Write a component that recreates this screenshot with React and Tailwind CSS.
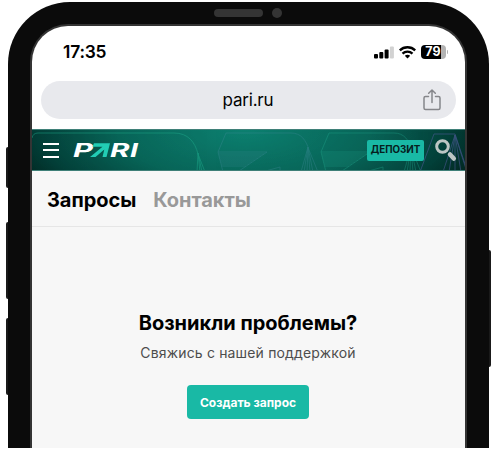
const tabs = [
  { id: "requests", label: "Запросы", className: "text-black" },
  { id: "contacts", label: "Контакты", className: "text-[#999999]" },
];

const hatch = [0, 2, 4, 6, 8, 10, 12, 14];
const fan = [0, 3, 6, 9, 12];

function StatusBar() {
  return (
    <div className="flex h-[52px] shrink-0 items-center justify-between pl-[31px] pr-[17px]">
      <span className="text-[17.4px] font-semibold leading-none tracking-[-0.2px]">17:35</span>
      <div className="flex items-center gap-[5px]">
        <svg width="20" height="13" viewBox="0 0 20 13">
          <rect x="0" y="8" width="4" height="4.5" rx="1" />
          <rect x="5.3" y="6" width="4" height="6.5" rx="1" />
          <rect x="10.6" y="3.4" width="4" height="9.1" rx="1" />
          <rect x="15.9" y="0.5" width="4" height="12" rx="1" fill="#d2d2d2" />
        </svg>
        <svg width="17" height="13" viewBox="0 0 17 13" fill="none" stroke="#000" strokeWidth="2.3">
          <path d="M.8 4.4C5 .2 12 .2 16.2 4.4" />
          <path d="M3.5 7.600C6.3 4.900 10.700 4.900 13.500 7.600" />
          <path d="M5.800 9.800Q8.500 7.700 11.200 9.800L8.500 12.600Z" fill="#000" stroke="none" />
        </svg>
        <div className="flex items-center gap-px">
          <div className="flex h-[14px] w-[25px] items-center justify-center rounded-[4px] bg-[linear-gradient(to_right,#000_80%,#b3b3b3_80%)] pr-px text-[12.5px] font-bold leading-none text-white">
            79
          </div>
          <span className="h-1 w-px rounded-r bg-[#b3b3b3]" />
        </div>
      </div>
    </div>
  );
}

function AddressBar() {
  return (
    <div className="ml-[8.5px] mr-[9.5px] mt-[3px] flex h-[38px] shrink-0 items-center rounded-full bg-[#e8e9ed] pl-[33px] pr-[15px]">
      <span className="flex-1 text-center text-[17px] leading-none tracking-[-0.2px]">pari.ru</span>
      <svg
        width="18"
        height="22"
        viewBox="0 0 18 22"
        fill="none"
        stroke="#85868a"
        strokeWidth="1.5"
        strokeLinecap="round"
        strokeLinejoin="round"
      >
        <path d="M5.5 7.5H2.5Q1 7.5 1 9V19Q1 20.5 2.5 20.5H15.5Q17 20.5 17 19V9Q17 7.5 15.5 7.5H12.5" />
        <path d="M9 13.5V1M5.7 4.2 9 1 12.3 4.2" />
      </svg>
    </div>
  );
}

function PatternShape({ x, color }) {
  return (
    <g transform={`translate(${x} 0)`} stroke={color} fill="none" strokeWidth="0.7">
      <path d="M0 22 8 3H73C83 3 88 10 91 20L100 42" />
      {hatch.map((y) => (
        <path key={y} d={`M${y / 4} ${22 + y}H${49 - y * 1.5}`} />
      ))}
      <path d="M49 22 21 41M0 22 5 42M44 42 62 37V42" />
      {fan.map((dx) => (
        <path key={dx} d={`M90 17 ${83 + dx} 42`} />
      ))}
    </g>
  );
}

function HeaderPattern() {
  return (
    <svg className="absolute inset-0" width="433" height="40" viewBox="0 0 433 40">
      <g fill="none" stroke="#1fa98c" strokeWidth="0.8" opacity="0.6">
        <path d="M0 8Q1 3 6 3H142C156 3 163 12 166 24L173 42" />
        <path d="M166 23 165 42M166 23 168 42M166 23 170 42" />
      </g>
      <g opacity="0.5">
        <PatternShape x={186} color="#3f8a98" />
        <PatternShape x={289} color="#23ab91" />
      </g>
      <g fill="none" stroke="#505b9b" strokeWidth="0.8" opacity="0.7">
        <path d="M388 42 402 4H423L433 34" />
        {fan.map((dx) => (
          <path key={dx} d={`M423 5 ${411 + dx * 2} 42`} />
        ))}
      </g>
    </svg>
  );
}

function Logo() {
  return (
    <svg width="76" height="30" viewBox="-4 -7 76 30" role="img" aria-label="PARI">
      <g fill="#fff" fontFamily="Inter, sans-serif" fontSize="19" fontWeight="700" fontStyle="italic">
        <text x="1" y="15" textLength="20" lengthAdjust="spacingAndGlyphs">P</text>
        <text x="38" y="15" textLength="19.5" lengthAdjust="spacingAndGlyphs">R</text>
        <text x="58" y="15" textLength="8" lengthAdjust="spacingAndGlyphs">I</text>
      </g>
      <path d="M22 1.300H38L34.500 15H30.500L32.300 7.500 23.500 15H18L30.500 4.800H20.500Z" fill="#22cdb4" />
    </svg>
  );
}

function SiteHeader() {
  return (
    <header className="relative mt-[10px] h-[42px] shrink-0 border-y border-[#3f8078] bg-[radial-gradient(ellipse_250px_100px_at_49%_0%,#0c8070_0%,#086558_50%,#034039_82%,#02241f_100%)]">
      <HeaderPattern />
      <div className="relative flex h-full items-center pl-[11px] pr-[7px]">
        <button className="mr-[9px] flex w-4 flex-col gap-[4.5px]" aria-label="menu">
          <span className="h-[2px] w-full bg-white" />
          <span className="h-[2px] w-full bg-white" />
          <span className="h-[2px] w-full bg-white" />
        </button>
        <Logo />
        <button className="ml-auto mr-[10px] h-[21px] w-[57px] rounded-[2px] bg-[#19b9a5] text-[9.8px] font-bold leading-none text-[#06201d]">
          ДЕПОЗИТ
        </button>
        <svg width="24" height="24" viewBox="0 0 24 24" fill="none" stroke="#bcc6c4">
          <circle cx="8.5" cy="8.5" r="5.8" strokeWidth="3" />
          <path d="m16 16.5 3.8 4" strokeWidth="4.500" strokeLinecap="round" />
        </svg>
      </div>
    </header>
  );
}

function Screen() {
  return (
    <div className="flex h-full flex-col overflow-hidden rounded-t-[36px] bg-white">
      <StatusBar />
      <AddressBar />
      <SiteHeader />
      <nav className="flex h-[56px] shrink-0 items-center gap-[17px] border-b border-[#e6e6e6] bg-[#f7f7f7] pl-[15px] pt-[2px]">
        {tabs.map((tab) => (
          <span
            key={tab.id}
            className={`text-[20px] font-bold leading-none tracking-[-0.05px] ${tab.className}`}
          >
            {tab.label}
          </span>
        ))}
      </nav>
      <main className="flex flex-1 flex-col items-center bg-[#f7f7f7] pr-px pt-[84px]">
        <h1 className="text-[20px] font-bold leading-6">Возникли проблемы?</h1>
        <p className="mt-[8px] text-[14px] leading-5 tracking-[0.16px] text-[#4d4d4d]">
          Свяжись с нашей поддержкой
        </p>
        <button className="mt-[22px] h-[34px] w-[122px] rounded-[4px] bg-[#19b9a5] pt-px text-[12px] font-bold leading-none text-white">
          Создать запрос
        </button>
      </main>
    </div>
  );
}

export default function App() {
  return (
    <div className="h-[453px] overflow-hidden bg-white pl-[6px] pt-[2px] font-['Inter',sans-serif] text-black">
      <div className="flex h-[446px]">
        <div className="flex w-[2px] flex-col pt-[145px]">
          <span className="h-[41px] rounded-l-sm bg-[#1a1a1a]" />
          <span className="mt-[34px] h-[77px] rounded-l-sm bg-[#1a1a1a]" />
          <span className="mt-[19px] h-[77px] rounded-l-sm bg-[#1a1a1a]" />
        </div>
        <div className="flex w-[481px] flex-col rounded-t-[62px] bg-[#0b0b0b] px-[22px]">
          <div className="flex h-[22px] shrink-0 items-center pl-[184px]">
            <span className="h-2 w-[49px] rounded-full bg-[#343434]" />
            <span className="ml-[9px] h-[10px] w-[10px] rounded-full bg-[#343434]" />
          </div>
          <div className="min-h-0 flex-1 rounded-t-[38px] bg-[#343434] px-[2px] pt-[2px]">
            <Screen />
          </div>
        </div>
        <div className="w-[2px] pt-[248px]">
          <div className="h-[117px] rounded-r-sm bg-[#1a1a1a]" />
        </div>
      </div>
    </div>
  );
}
